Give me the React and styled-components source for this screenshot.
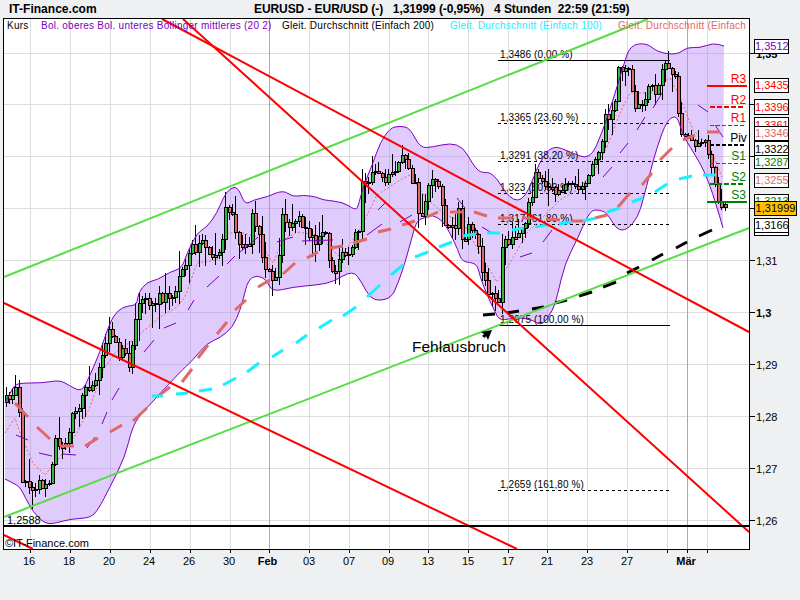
import React from "react";
import styled, { createGlobalStyle } from "styled-components";

const GlobalStyle = createGlobalStyle`
  html, body { margin: 0; padding: 0; background: #eff0f2; }
  body { font-family: "Liberation Sans", Arial, sans-serif; }
`;

const Page = styled.div`
  width: 800px; height: 600px; background: #eff0f2; overflow: hidden;
  display: flex; flex-direction: column; color: #000;
`;
const Header = styled.header`
  height: 18px; display: flex; align-items: center; position: relative; flex: none;
  font-weight: 700; font-size: 12px; line-height: 18px; padding-left: 9px;
`;
const Logo = styled.div`width: 245px; flex: none; letter-spacing: 0.02px;`;
const Title = styled.div`white-space: pre; letter-spacing: -0.08px;`;
const ChartPanel = styled.div`position: relative; width: 800px; height: 582px; flex: none;`;
const ChartSvg = styled.svg`display: block; position: absolute; left: 0; top: 0;`;
const Legend = styled.div`
  position: absolute; left: 7px; top: 1px; width: 741px; height: 14px; overflow: hidden;
  display: flex; font-size: 10px; line-height: 14px; letter-spacing: 0.25px; white-space: nowrap;
`;
const LegendItem = styled.span`
  color: ${p => p.$color}; width: ${p => p.$w}px; flex: none;
`;
const PriceTag = styled.div`
  position: absolute; left: 754px; top: ${p => p.$top - 18}px; width: ${p => p.$w || 35}px; height: ${p => p.$h || 15}px;
  box-sizing: border-box; border: 1px solid #000; background: ${p => p.$bg || "#fff"};
  color: ${p => p.$color}; font-size: 11px; line-height: ${p => (p.$h || 15) - 2}px; text-align: center;
  overflow: hidden;
`;

const GRIDY = [53.5, 104.5, 156.5, 208.5, 260.5, 312.5, 364.5, 416.5, 468.5, 520.5];
const GRIDX = [30.5, 70.5, 110.5, 150.5, 190.5, 230.5, 309.5, 349.5, 389.5, 428.5, 468.5, 508.5, 547.5, 587.5, 627.5, 667.5, 707.5];
const XLABELS = [[29,"16"],[69,"18"],[109,"20"],[149,"24"],[189,"26"],[229,"30"],[267.5,"Feb",1],[309,"03"],[349,"07"],[388,"09"],[428,"13"],[468,"15"],[508,"17"],[547,"21"],[587,"23"],[627,"27"],[686,"Mär",1]];
const YLABELS = [[53.5,"1,35",1],[104.5,"1,34"],[156.5,"1,33"],[208.5,"1,32"],[260.5,"1,31"],[312.5,"1,3",1],[364.5,"1,29"],[416.5,"1,28"],[468.5,"1,27"],[520.5,"1,26"]];

const UPPER = [[5,403],[13,386],[20,383],[43,383],[60,380],[70,386],[82,392],[90,375],[100,352],[110,322],[118,310],[127,306],[137,305],[138,293],[147,282],[157,280],[170,272],[182,268],[187,253],[197,233],[207,227],[217,213],[223,198],[230,188],[238,187],[245,205],[253,200],[267,197],[283,190],[293,197],[303,195],[317,197],[323,200],[343,202],[355,210],[358,207],[363,187],[373,163],[380,143],[390,128],[400,126],[410,128],[420,148],[433,147],[450,143],[463,147],[472,163],[480,173],[493,172],[510,200],[525,200],[540,160],[553,145],[570,152],[590,160],[602,133],[613,100],[623,67],[630,45],[647,43],[657,52],[677,55],[687,47],[700,48],[713,43],[724,46]];
const LOWER = [[723,228],[717,207],[708,180],[700,163],[690,147],[682,133],[677,115],[667,120],[657,147],[650,173],[643,200],[638,217],[627,230],[617,230],[607,213],[600,210],[590,210],[577,240],[565,263],[557,297],[553,310],[542,326],[533,320],[517,317],[500,321],[495,312],[488,297],[480,277],[477,263],[462,262],[458,250],[450,233],[442,220],[432,215],[427,217],[417,220],[412,237],[405,263],[398,283],[392,297],[380,301],[370,298],[362,283],[353,270],[333,282],[317,285],[293,287],[272,292],[267,280],[257,275],[248,280],[243,300],[240,310],[233,327],[220,338],[207,343],[193,360],[180,372],[157,397],[140,415],[132,428],[125,457],[110,487],[98,510],[90,518],[70,519],[57,523],[45,524],[33,512],[25,497],[20,487],[13,483],[5,479]];

const CLOSE = [[5,402],[13,388],[17,395],[20,425],[22,485],[25,485],[28,478],[32,490],[37,485],[42,482],[47,485],[52,465],[55,435],[60,445],[65,445],[70,425],[75,410],[80,403],[87,385],[92,390],[97,365],[102,360],[107,330],[113,330],[118,357],[125,350],[130,368],[135,320],[140,295],[145,300],[155,298],[165,298],[172,298],[182,268],[187,260],[192,250],[197,250],[203,232],[207,255],[212,258],[217,262],[222,240],[225,205],[230,210],[233,222],[238,240],[243,245],[248,250],[252,215],[258,225],[262,262],[268,275],[273,285],[278,270],[282,215],[290,228],[297,215],[302,230],[308,235],[315,245],[320,230],[326,235],[330,265],[337,272],[342,250],[348,255],[353,240],[358,233],[360,187],[363,182],[372,173],[377,165],[380,173],[387,182],[392,173],[397,165],[402,158],[407,167],[412,177],[417,187],[418,213],[423,217],[428,183],[433,182],[438,183],[442,203],[445,227],[450,232],[455,230],[458,213],[463,253],[468,227],[475,230],[478,247],[483,283],[488,290],[498,297],[502,243],[507,243],[512,238],[517,233],[524,233],[528,207],[532,197],[535,175],[540,187],[543,180],[548,193],[553,183],[557,197],[562,185],[570,187],[573,183],[577,197],[585,182],[590,173],[595,163],[600,147],[605,118],[610,118],[615,100],[618,72],[622,72],[627,75],[630,73],[635,105],[640,107],[645,100],[650,83],[655,90],[660,73],[663,63],[670,63],[675,80],[678,113],[682,137],[687,140],[692,143],[697,140],[702,143],[707,143],[711,167],[715,190],[717,203],[721,206],[724,207]];

const interp = (pts, x) => {
  for (let i = 1; i < pts.length; i++) {
    if (x <= pts[i][0]) {
      const [a, b] = pts[i - 1], [c, d] = pts[i];
      return b + ((x - a) / (c - a || 1)) * (d - b);
    }
  }
  return pts[pts.length - 1][1];
};
const rnd = i => { const s = Math.sin(i * 12.9898 + 4.1) * 43758.5453; return s - Math.floor(s); };

const BARS = (() => {
  const out = [];
  let prev = 402;
  for (let i = 0; i < 217; i++) {
    const cx = Math.floor(6 + i * 3.33);
    const c = Math.round(interp(CLOSE, cx) + (rnd(i + 50) - 0.5) * 12);
    const top = Math.min(prev, c), bot = Math.max(prev, c);
    const up = 1 + Math.floor(rnd(i) * rnd(i + 9) * 26);
    const dn = 1 + Math.floor(rnd(i + 300) * rnd(i + 17) * 26);
    out.push({ x: cx, top, bot: bot === top ? top + 2 : bot, hi: top - up, lo: bot + dn, green: c < prev });
    prev = c;
  }
  return out;
})();

// Path through the midpoints of the traced points, so the band edge reads as a smooth curve.
const smooth = pts => {
  let d = `M${pts[0][0]},${pts[0][1]}`;
  for (let i = 1; i < pts.length - 1; i++) {
    const mx = (pts[i][0] + pts[i + 1][0]) / 2, my = (pts[i][1] + pts[i + 1][1]) / 2;
    d += ` Q${pts[i][0]},${pts[i][1]} ${mx},${my}`;
  }
  const l = pts[pts.length - 1];
  return d + ` L${l[0]},${l[1]}`;
};

const seg = a => a.map(([x1, y1, x2, y2], i) => <line key={i} x1={x1} y1={y1} x2={x2} y2={y2} />);
const MA_SALMON = [[15,403,28,417],[37,427,50,439],[60,446,74,446],[85,446,98,438],[110,432,122,425],[133,421,147,408],[157,397,170,387],[182,382,192,369],[198,358,208,345],[217,334,227,322],[235,310,246,300],[258,287,270,280],[283,274,295,263],[307,258,318,252],[330,248,343,246],[353,243,367,239],[378,232,391,229],[402,225,415,221],[427,217,438,212],[450,212,463,212],[474,212,487,216],[498,218,512,218],[522,218,535,218],[547,219,560,220],[572,221,583,221],[595,218,607,215],[618,207,630,193],[642,185,652,173],[660,160,672,148],[683,140,695,135],[707,132,720,132]];
const MA_CYAN = [[152,396,163,396],[176,394,188,393],[199,391,212,389],[223,385,236,378],[247,372,259,363],[272,357,283,350],[296,343,307,335],[319,328,332,320],[343,316,356,307],[367,297,380,285],[391,275,403,265],[415,257,428,252],[439,247,452,242],[463,236,476,234],[487,233,500,233],[512,230,524,228],[535,227,547,225],[559,224,572,222],[583,221,596,218],[607,212,620,208],[632,202,643,198],[655,192,667,184],[679,179,692,176],[703,175,716,175]];
const MA_BLACK = [[483,315,495,314],[507,313,519,311],[532,309,544,307],[555,303,567,300],[579,296,592,292],[603,287,616,282],[627,273,639,267],[652,260,663,254],[676,248,687,242],[699,236,712,230]];
const MA_PURPLE = [[16,435,28,440],[39,453,52,456],[63,454,76,455],[87,448,95,437],[102,424,107,412],[112,400,119,388],[144,352,154,340],[164,328,176,323],[188,310,194,300],[207,287,219,276],[227,264,235,256],[239,253,258,237],[277,242,293,237],[302,241,333,240],[367,235,382,224],[378,210,385,203],[400,222,412,215],[457,198,465,208],[482,227,492,233],[520,257,532,253],[543,242,552,230],[603,177,612,167],[620,153,628,143],[637,130,645,117],[653,108,662,93],[698,105,708,112],[715,125,723,137]];
const MA_THIN = "5,433 15,418 20,433 33,463 45,475 60,457 77,433 90,407 103,370 115,353 133,340 160,317 177,307 185,297 197,263 217,260 227,233 243,233 257,237 273,263 283,240 297,232 317,235 330,247 340,257 358,233 377,195 400,180 410,175 425,197 443,213 463,223 480,253 497,282 510,263 527,233 543,217 560,200 577,190 593,173 607,147 620,113 630,93 650,93 663,83 670,78 680,97 693,130 710,147 722,177";

const FIBS = [
  [60.5, "1,3486 (0,00 %)", false],
  [123.5, "1,3365 (23,60 %)", true],
  [161.5, "1,3291 (38,20 %)", true],
  [193.5, "1,323 (50,00 %)", true],
  [224, "1,317 (61,80 %)", true],
  [325.5, "1,2975 (100,00 %)", false],
  [490.5, "1,2659 (161,80 %)", true],
];
const PIVOTS = [
  ["R3", 79, 86, "#ff0000", 707, 747, 2.5, ""],
  ["R2", 100, 107, "#ff0000", 710, 745, 2, "5 2"],
  ["R1", 118, 125.5, "#ff0000", 710, 745, 1, "4 2"],
  ["Piv", 138, 144.5, "#000", 710, 745, 2, "4 2"],
  ["S1", 156, 163.5, "#008000", 710, 745, 1, "4 2"],
  ["S2", 177, 184, "#008000", 710, 745, 2, "5 2"],
  ["S3", 195, 202, "#008000", 707, 747, 2, ""],
];
const TAGS = [
  ["1,3512", 38.5, "#7a00c0"],
  ["1,3435", 78, "#ff0000"],
  ["1,3396", 99, "#ff0000", 16],
  ["1,3361", 117, "#ff0000", 16],
  ["1,3346", 126, "#e06868"],
  ["1,3322", 141, "#000", 16],
  ["1,3287", 155, "#008000", 14],
  ["1,3255", 173, "#e06868"],
  ["1,3213", 194, "#008000", 15],
  ["1,3164", 221, "#7a00c0", 15],
  ["1,3166", 218, "#000"],
];

const Chart = () => (
  <ChartSvg width="800" height="582" viewBox="0 18 800 582" fontFamily="'Liberation Sans', Arial, sans-serif">
    <rect x="3.5" y="18.5" width="746" height="531" fill="#fff" />
    <g stroke="#dddddd" strokeWidth="1" shapeRendering="crispEdges">
      {GRIDY.map(y => <line key={y} x1="4" x2="749" y1={y} y2={y} />)}
      {GRIDX.map(x => <line key={x} x1={x} x2={x} y1="19" y2="549" />)}
      <line x1="269.5" x2="269.5" y1="19" y2="549" stroke="#aaaaaa" />
      <line x1="687.5" x2="687.5" y1="19" y2="549" stroke="#aaaaaa" />
    </g>
    <path d={`${smooth(UPPER)} ${smooth(LOWER).replace("M", "L")} Z`} fill="rgba(177,127,247,0.4)" />
    <g fontSize="10" letterSpacing="0.1" fill="#000">
      {FIBS.map(([y, t]) => <text key={y} x="500" y={y - 2.5}>{t}</text>)}
    </g>
    <g stroke="#000" shapeRendering="crispEdges">
      {FIBS.map(([y, , dash]) => <line key={y} x1="498" x2="670" y1={y} y2={y} strokeDasharray={dash ? "3 3" : undefined} />)}
    </g>
    <polyline points={MA_THIN} fill="none" stroke="#e06868" strokeWidth="1" strokeDasharray="2 2" />
    <g shapeRendering="crispEdges">
      {BARS.map((b, i) => (
        <g key={i}>
          <line x1={b.x + 0.5} x2={b.x + 0.5} y1={b.hi} y2={b.lo} stroke="#000" />
          <rect x={b.x - 0.5} y={b.top + 0.5} width="3" height={b.bot - b.top} fill={b.green ? "#2fb83a" : "#e06868"} stroke="#000" strokeWidth="1" />
        </g>
      ))}
    </g>
    <g stroke="#7a00c0" strokeWidth="1" fill="none">
      <g>{seg(MA_PURPLE)}</g>
      <path d={smooth(UPPER)} />
      <path d={smooth(LOWER)} />
    </g>
    <g strokeWidth="3">
      <g stroke="#e06868">{seg(MA_SALMON)}</g>
      <g stroke="#19f0ff">{seg(MA_CYAN)}</g>
      <g stroke="#000">{seg(MA_BLACK)}</g>
    </g>
    <g shapeRendering="crispEdges">
      {PIVOTS.map(([n, , y, c, a, b, w, d]) => <line key={n} x1={a} x2={b} y1={y} y2={y} stroke={c} strokeWidth={w} strokeDasharray={d || undefined} />)}
    </g>
    <g fontSize="12" textAnchor="middle">
      {PIVOTS.map(([n, y, , c]) => <text key={n} x="738.5" y={y + 4} fill={c}>{n}</text>)}
    </g>
    <g strokeWidth="2" fill="none">
      <line x1="4" y1="277" x2="648" y2="19" stroke="#55dd44" />
      <line x1="4" y1="517" x2="749" y2="228" stroke="#55dd44" />
      <line x1="162" y1="19" x2="749" y2="332" stroke="#ff0000" />
      <line x1="183" y1="19" x2="749" y2="532" stroke="#ff0000" />
      <line x1="4" y1="303" x2="517" y2="549" stroke="#ff0000" />
      <line x1="4" y1="535" x2="33" y2="549" stroke="#ff0000" />
      <line x1="4" y1="526" x2="749" y2="526" stroke="#000" shapeRendering="crispEdges" />
    </g>
    <text x="7" y="524" fontSize="11" fill="#000">1,2588</text>
    <text x="5" y="547" fontSize="11" fill="#000">©IT-Finance.com</text>
    <text x="412" y="352" fontSize="15.5" fill="#000">Fehlausbruch</text>
    <path d="M492,330 L481,332 L484,334 L482,336 L485,338 L486,336 L488,340 Z" fill="#000" />
    <rect x="3.5" y="18.5" width="746" height="531" fill="none" stroke="#000" shapeRendering="crispEdges" />
    <g stroke="#000" shapeRendering="crispEdges">
      {GRIDY.map(y => <line key={y} x1="749" x2="755" y1={y} y2={y} />)}
      {GRIDX.concat([269.5, 687.5]).map(x => <line key={x} x1={x} x2={x} y1="549" y2="553" />)}
    </g>
    <g fontSize="11" fill="#000">
      {YLABELS.map(([y, t, b]) => <text key={y} x="756" y={y + 4.5} fontWeight={b ? 700 : 400}>{t}</text>)}
    </g>
    <g fontSize="11" fill="#000" textAnchor="middle">
      {XLABELS.map(([x, t, b]) => <text key={x} x={x} y="565" fontWeight={b ? 700 : 400}>{t}</text>)}
    </g>
  </ChartSvg>
);

export default function App() {
  return (
    <Page>
      <GlobalStyle />
      <Header>
        <Logo>IT-Finance.com</Logo>
        <Title>{"EURUSD - EUR/USD (-)   1,31999 (-0,95%)   4 Stunden  22:59 (21:59)"}</Title>
      </Header>
      <ChartPanel>
        <Chart />
        <Legend>
          <LegendItem $color="#000" $w={34}>Kurs</LegendItem>
          <LegendItem $color="#7a00c0" $w={241}>Bol. oberes Bol. unteres Bollinger mittleres (20 2)</LegendItem>
          <LegendItem $color="#000" $w={168}>Gleit. Durchschnitt (Einfach 200)</LegendItem>
          <LegendItem $color="#19f0ff" $w={168}>Gleit. Durchschnitt (Einfach 100)</LegendItem>
          <LegendItem $color="#e06868" $w={168}>Gleit. Durchschnitt (Einfach 50)</LegendItem>
        </Legend>
        {TAGS.map(([t, top, c, h]) => <PriceTag key={t} $top={top} $color={c} $h={h}>{t}</PriceTag>)}
        <PriceTag $top={200.5} $w={43} $h={15} $bg="#ffc000" $color="#000">1,31999</PriceTag>
      </ChartPanel>
    </Page>
  );
}
